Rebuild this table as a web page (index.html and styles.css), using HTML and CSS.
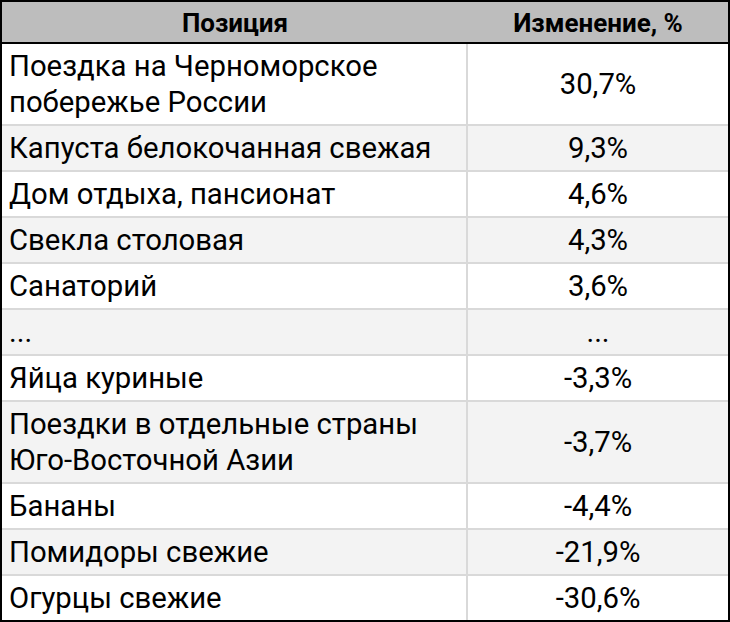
FILE: index.html
```html
<!DOCTYPE html>
<html lang="ru">
<head>
<meta charset="utf-8">
<title>Изменение цен</title>
<link rel="stylesheet" href="styles.css">
</head>
<body>
<div class="table">
  <div class="head">
    <div class="hcell">Позиция</div>
    <div class="hcell">Изменение, %</div>
  </div>
  <div class="row"><div class="name">Поездка на Черноморское<br>побережье России</div><div class="val">30,7%</div></div>
  <div class="row alt"><div class="name">Капуста белокочанная свежая</div><div class="val">9,3%</div></div>
  <div class="row"><div class="name">Дом отдыха, пансионат</div><div class="val">4,6%</div></div>
  <div class="row alt"><div class="name">Свекла столовая</div><div class="val">4,3%</div></div>
  <div class="row"><div class="name">Санаторий</div><div class="val">3,6%</div></div>
  <div class="row alt"><div class="name">...</div><div class="val">...</div></div>
  <div class="row"><div class="name">Яйца куриные</div><div class="val">-3,3%</div></div>
  <div class="row alt"><div class="name">Поездки в отдельные страны<br>Юго-Восточной Азии</div><div class="val">-3,7%</div></div>
  <div class="row"><div class="name">Бананы</div><div class="val">-4,4%</div></div>
  <div class="row alt"><div class="name">Помидоры свежие</div><div class="val">-21,9%</div></div>
  <div class="row"><div class="name">Огурцы свежие</div><div class="val">-30,6%</div></div>
</div>
</body>
</html>
```

FILE: styles.css
```css
html, body {
  margin: 0;
  padding: 0;
  background: #ffffff;
}

body {
  font-family: Roboto, "Liberation Sans", sans-serif;
  font-size: 29.3px;
  color: #000000;
}

.table {
  width: 730px;
  box-sizing: border-box;
  border: 2px solid #000000;
}

.head {
  display: grid;
  grid-template-columns: 466px 260px;
  background: #bdbdbd;
  border-bottom: 2px solid #000000;
  height: 40px;
}

.hcell {
  font-size: 26px;
  font-weight: 700;
  text-align: center;
  line-height: 36px;
  padding-top: 3px;
}

.row {
  display: grid;
  grid-template-columns: 464px 260px;
  column-gap: 2px;
  background: #d9d9d9;
}

.row + .row {
  border-top: 2px solid #d9d9d9;
}

.row > div {
  background: #ffffff;
  line-height: 36px;
  padding: 4px 7px;
}

.row.alt > div {
  background: #f3f3f3;
}

.val {
  text-align: center;
  display: flex;
  align-items: center;
  justify-content: center;
}
```
